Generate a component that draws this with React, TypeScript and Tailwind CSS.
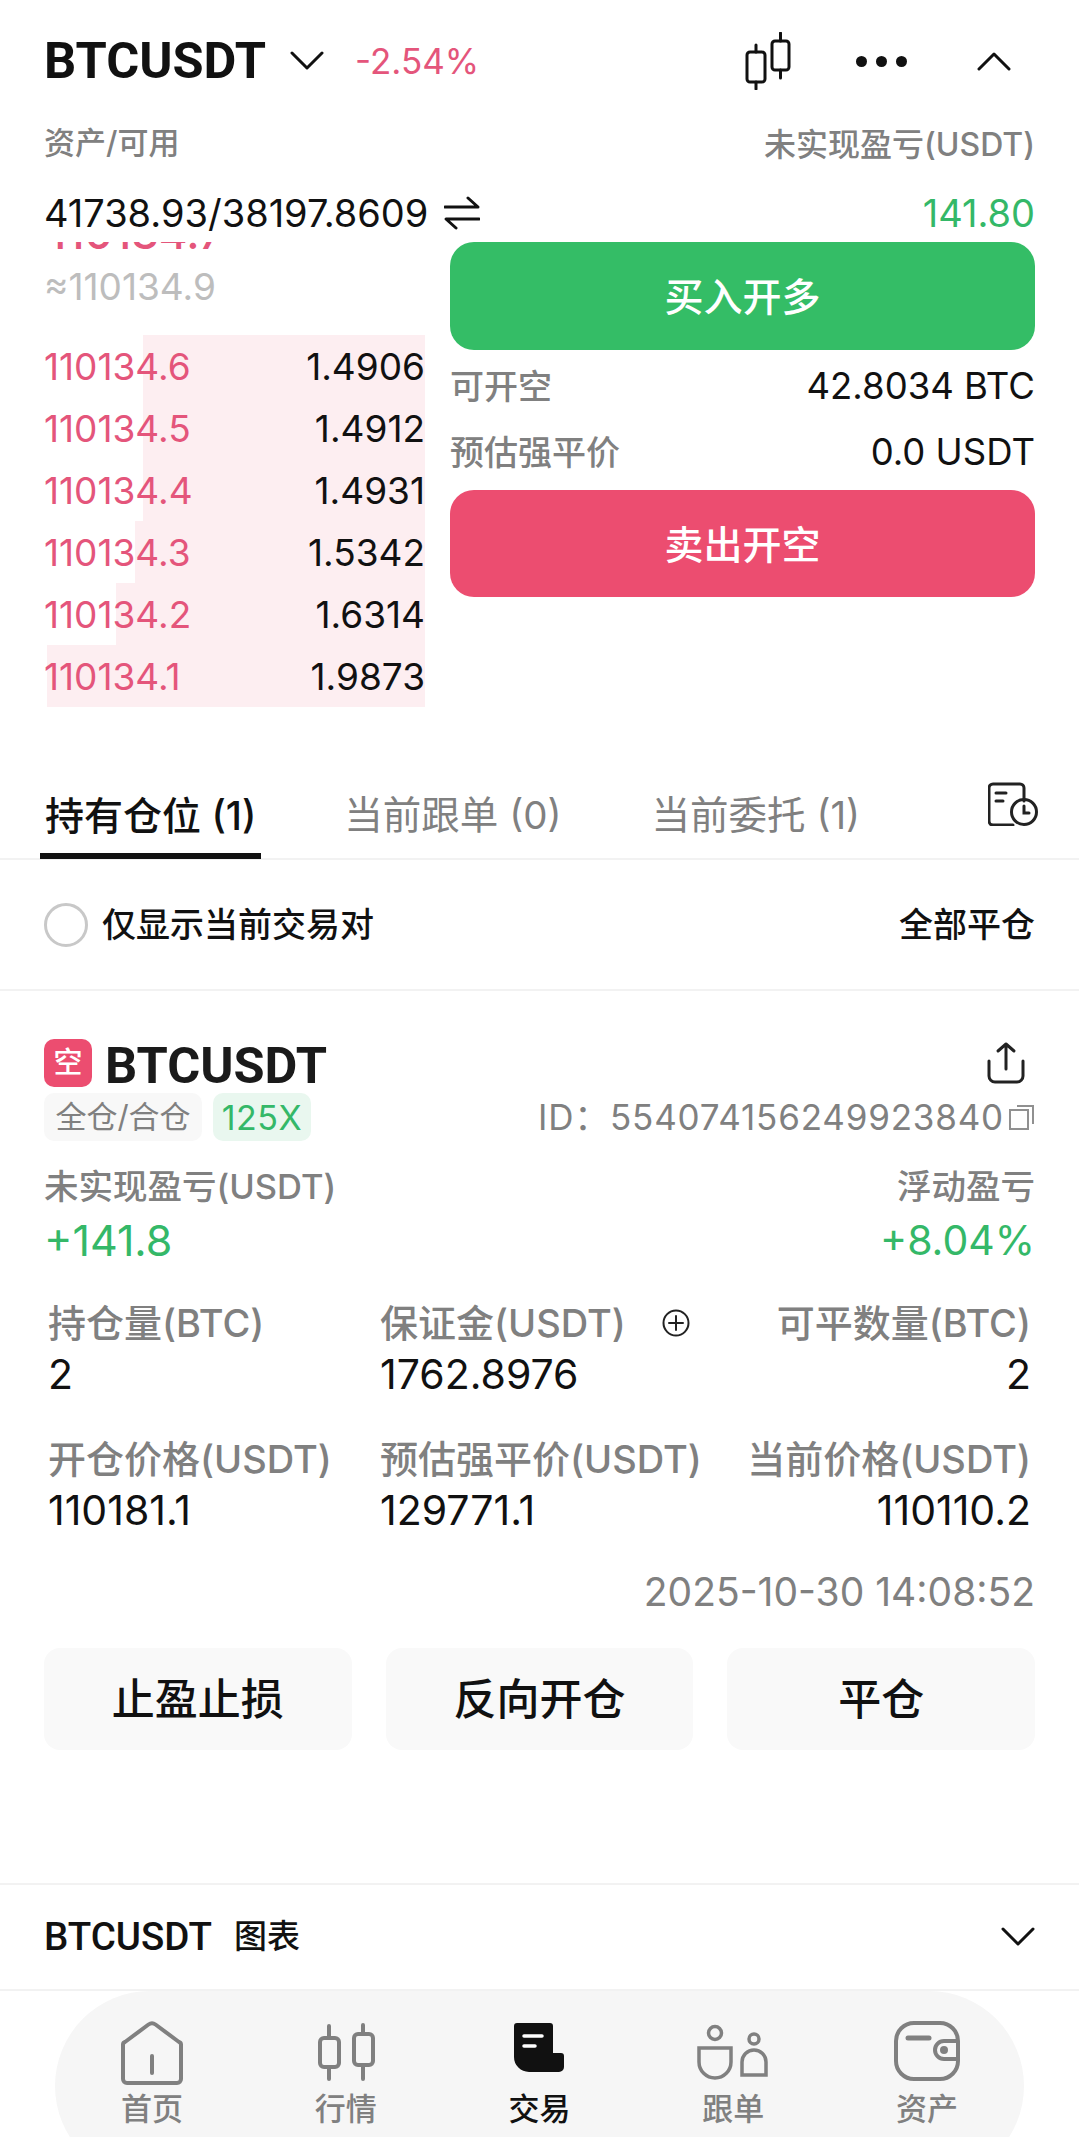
const depthRows = [
  { price: "110134.6", qty: "1.4906", bar: 282 },
  { price: "110134.5", qty: "1.4912", bar: 282 },
  { price: "110134.4", qty: "1.4931", bar: 282 },
  { price: "110134.3", qty: "1.5342", bar: 290 },
  { price: "110134.2", qty: "1.6314", bar: 309 },
  { price: "110134.1", qty: "1.9873", bar: 378 },
];

const gridRows = [
  [
    { label: "持仓量(BTC)", value: "2" },
    { label: "保证金(USDT)", value: "1762.8976", plus: true },
    { label: "可平数量(BTC)", value: "2" },
  ],
  [
    { label: "开仓价格(USDT)", value: "110181.1" },
    { label: "预估强平价(USDT)", value: "129771.1" },
    { label: "当前价格(USDT)", value: "110110.2" },
  ],
];

function Chevron({ up, className }: { up?: boolean; className: string }) {
  return (
    <svg viewBox="0 0 34 20" className={className} fill="none" stroke="#111" strokeWidth="3" strokeLinecap="round" strokeLinejoin="round">
      <path d={up ? "M2 18 17 3l15 15" : "M2 2l15 15L32 2"} />
    </svg>
  );
}

function CandleHeader() {
  return (
    <svg viewBox="0 0 46 58" className="w-[46px] h-[58px]" fill="none" stroke="#111" strokeWidth="3" strokeLinecap="round">
      <rect x="2" y="20" width="18" height="30" rx="3" />
      <path d="M11 13v7M11 50v7" />
      <rect x="27" y="9" width="17" height="29" rx="3" />
      <path d="M35.500 1v8M35.500 38v8" />
    </svg>
  );
}

function NavIcon({ name }: { name: string }) {
  if (name === "home") {
    return (
      <svg viewBox="0 0 62 64" className="w-[62px] h-[64px]" fill="none" stroke="#808080" strokeWidth="4" strokeLinejoin="round" strokeLinecap="round">
        <path d="M27.500 3.500a6 6 0 0 1 7 0L58 21a3 3 0 0 1 2 3v34a4 4 0 0 1-4 4H6a4 4 0 0 1-4-4V24a3 3 0 0 1 2-3Z" />
        <path d="M31 35v17" />
      </svg>
    );
  }
  if (name === "market") {
    return (
      <svg viewBox="0 0 58 64" className="w-[58px] h-[64px]" fill="none" stroke="#808080" strokeWidth="4" strokeLinecap="round">
        <rect x="3" y="17" width="19" height="29" rx="4" />
        <path d="M12 5v12M12 46v12" />
        <rect x="37" y="13" width="19" height="31" rx="4" />
        <path d="M46 4v9M46 44v14" />
      </svg>
    );
  }
  if (name === "trade") {
    return (
      <svg viewBox="0 0 50 64" className="w-[50px] h-[64px]">
        <path d="M3 2h33a3 3 0 0 1 3 3v27h8a3 3 0 0 1 3 3v11a5 5 0 0 1-5 5H15A15 15 0 0 1 0 36V5a3 3 0 0 1 3-3Z" fill="#111" />
        <path d="M10 15h18M10 25h11" stroke="#fff" strokeWidth="3.500" strokeLinecap="round" />
      </svg>
    );
  }
  if (name === "copy") {
    return (
      <svg viewBox="0 0 72 64" className="w-[72px] h-[64px]" fill="none" stroke="#808080" strokeWidth="3.500">
        <circle cx="18" cy="12" r="6.500" />
        <path d="M2 27h32v14a16 16 0 0 1-32 0Z" />
        <circle cx="57" cy="18" r="5" />
        <path d="M45 54V41a12 12 0 0 1 24 0v13Z" />
      </svg>
    );
  }
  return (
    <svg viewBox="0 0 66 64" className="w-[66px] h-[64px]" fill="none" stroke="#808080" strokeWidth="4" strokeLinecap="round">
      <rect x="2" y="2" width="62" height="56" rx="18" />
      <path d="M14 17h21" strokeWidth="5" />
      <path d="M63 20H50a9 9 0 0 0 0 18h13" />
      <circle cx="50" cy="29" r="4" fill="#808080" stroke="none" />
    </svg>
  );
}

const navItems = [
  { key: "home", label: "首页" },
  { key: "market", label: "行情" },
  { key: "trade", label: "交易", active: true },
  { key: "copy", label: "跟单" },
  { key: "wallet", label: "资产" },
];

export default function App() {
  return (
    <div className="relative h-[2137px] w-[1079px] overflow-hidden bg-white text-[#111] font-['Inter','Noto_Sans_CJK_SC',sans-serif]">
      {/* top bar */}
      <div className="flex h-[122px] items-center px-[44px]">
        <span className="font-['Roboto','Noto_Sans_CJK_SC',sans-serif] text-[50.500px] font-bold leading-none">BTCUSDT</span>
        <Chevron className="ml-[24px] h-[20px] w-[34px]" />
        <span className="ml-[31px] text-[35px] leading-none text-[#e4557b]">-2.54%</span>
        <div className="ml-auto flex items-center">
          <CandleHeader />
          <div className="ml-[65px] flex gap-[9px]">
            <span className="h-[11px] w-[11px] rounded-full bg-[#111]" />
            <span className="h-[11px] w-[11px] rounded-full bg-[#111]" />
            <span className="h-[11px] w-[11px] rounded-full bg-[#111]" />
          </div>
          <Chevron up className="ml-[70px] mr-[24px] h-[20px] w-[34px]" />
        </div>
      </div>

      {/* balance */}
      <div className="flex h-[48px] items-center justify-between px-[44px] text-[#808080]">
        <span className="-mt-[6px] text-[31px] font-medium">资产/可用</span>
        <span className="text-[32px] -mt-[2px] font-medium">未实现盈亏(USDT)</span>
      </div>
      <div className="mt-[18px] flex h-[50px] items-center justify-between px-[44px] text-[38px]">
        <div className="flex items-center gap-[16px]">
          <span>41738.93/38197.8609</span>
          <svg viewBox="0 0 36 34" className="h-[34px] w-[36px]" fill="none" stroke="#111" strokeWidth="3" strokeLinecap="round" strokeLinejoin="round">
            <path d="M1 11h33L24 2M35 23H2l10 9" />
          </svg>
        </div>
        <span className="text-[#34b868]">141.80</span>
      </div>

      {/* order book + actions */}
      <div className="mt-[4px] flex justify-between px-[44px]">
        <div className="w-[381px]">
          <div className="h-[9px] overflow-hidden">
            <div className="-mt-[32px] pl-[4px] text-[44px] font-medium leading-[46px] text-[#e4557b]">110134.7</div>
          </div>
          <div className="mt-[14px] text-[37px] leading-[44px] text-[#bdbdbd]">≈110134.9</div>
          <div className="mt-[26px]">
            {depthRows.map((row) => (
              <div key={row.price} className="relative flex h-[62px] items-center justify-between pt-[2px] text-[37px]">
                <div className="absolute inset-y-0 right-0 bg-[#fdeef1]" style={{ width: row.bar }} />
                <span className="relative text-[#e4557b]">{row.price}</span>
                <span className="relative">{row.qty}</span>
              </div>
            ))}
          </div>
        </div>
        <div className="w-[585px]">
          <div className="flex h-[108px] items-center justify-center rounded-[24px] bg-[#34bd66] pt-[3px] text-[39px] font-medium text-white">买入开多</div>
          <div className="mt-[8px] flex h-[56px] items-center justify-between text-[36.500px]">
            <span className="text-[34px] font-medium text-[#808080]">可开空</span>
            <span>42.8034 BTC</span>
          </div>
          <div className="mt-[10px] flex h-[56px] items-center justify-between text-[36.500px]">
            <span className="text-[34px] font-medium text-[#808080]">预估强平价</span>
            <span>0.0 USDT</span>
          </div>
          <div className="mt-[10px] flex h-[107px] items-center justify-center rounded-[24px] bg-[#ec4d70] pt-[4px] text-[39px] font-medium text-white">卖出开空</div>
        </div>
      </div>

      {/* tabs */}
      <div className="mt-[57px] flex h-[96px] items-end border-b-2 border-[#f2f2f2] pl-[40px] leading-none">
        <div className="flex items-center text-[38.500px]">
          <div className="-mb-[2px] border-b-[6px] border-[#111] px-[5px] pb-[18px] text-[39px] font-medium">持有仓位 (1)</div>
          <div className="ml-[83px] pb-[24px] text-[#808080]">当前跟单 (0)</div>
          <div className="ml-[90px] pb-[24px] text-[#808080]">当前委托 (1)</div>
        </div>
        <svg viewBox="0 0 50 44" className="mb-[32px] ml-auto mr-[41px] h-[44px] w-[50px]" fill="none" stroke="#222" strokeWidth="3" strokeLinecap="round">
          <path d="M36 19V6a4 4 0 0 0-4-4H5a4 4 0 0 0-4 4v33a4 4 0 0 0 4 4h20" />
          <path d="M8 11h10M8 19h7" />
          <circle cx="36" cy="30" r="12.500" />
          <path d="M36 24v7h5" />
        </svg>
      </div>

      {/* filter */}
      <div className="flex h-[131px] items-center border-b-2 border-[#f2f2f2] px-[44px] text-[34px] font-medium">
        <span className="h-[44px] w-[44px] rounded-full border-[3px] border-[#c8c8c8]" />
        <span className="ml-[14px]">仅显示当前交易对</span>
        <span className="ml-auto">全部平仓</span>
      </div>

      {/* position card */}
      <div className="px-[44px] pt-[47px]">
        <div className="flex h-[50px] items-center">
          <span className="flex h-[48px] w-[48px] items-center justify-center rounded-[10px] bg-[#ec4d70] text-[29px] font-medium text-white">空</span>
          <span className="ml-[13px] mt-[6px] font-['Roboto','Noto_Sans_CJK_SC',sans-serif] text-[50.500px] font-bold leading-none text-[#1a1a1a]">BTCUSDT</span>
          <svg viewBox="0 0 38 42" className="ml-auto mr-[10px] h-[42px] w-[38px]" fill="none" stroke="#222" strokeWidth="3" strokeLinecap="round" strokeLinejoin="round">
            <path d="M19 27V2M11 9l8-7 8 7" />
            <path d="M2 19v15a6 6 0 0 0 6 6h22a6 6 0 0 0 6-6V19" />
          </svg>
        </div>
        <div className="mt-[5px] flex h-[48px] items-center gap-[11px]">
          <span className="flex h-[48px] w-[158px] items-center justify-center rounded-[10px] bg-[#f8f8f8] text-[31px] text-[#808080]">全仓/合仓</span>
          <span className="flex h-[48px] w-[98px] items-center justify-center rounded-[10px] bg-[#e9f7ef] text-[34px] text-[#34b868] tracking-[0.5px]">125X</span>
          <span className="ml-auto flex items-center text-[35px] text-[#808080] tracking-[0.8px]">
            ID：554074156249923840
            <svg viewBox="0 0 26 26" className="ml-[5px] h-[26px] w-[26px]" fill="none" stroke="#909090" strokeWidth="2">
              <rect x="1" y="6" width="18" height="19" />
              <path d="M8 2h16v18" />
            </svg>
          </span>
        </div>
        <div className="mt-[24px] flex justify-between text-[34.500px] font-medium leading-[44px] text-[#808080]">
          <span>未实现盈亏(USDT)</span>
          <span>浮动盈亏</span>
        </div>
        <div className="mt-[6px] flex justify-between leading-[50px] text-[#34b868]">
          <span className="text-[43px]">+141.8</span>
          <span className="text-[41px]">+8.04%</span>
        </div>

        <div className="mt-[34px] pl-[4px] pr-[4px]">
          {gridRows.map((row, i) => (
            <div key={i} className={`grid grid-cols-[332px_1fr_auto] ${i > 0 ? "mt-[36px]" : ""}`}>
              {row.map((cell, j) => (
                <div key={cell.label} className={j === 2 ? "text-right" : ""}>
                  <div className="flex items-center text-[38px] font-medium leading-[48px] text-[#808080]">
                    <span className={j === 2 ? "ml-auto" : ""}>{cell.label}</span>
                    {cell.plus && (
                      <svg viewBox="0 0 28 28" className="ml-[36px] h-[28px] w-[28px]" fill="none" stroke="#222" strokeWidth="2" strokeLinecap="round">
                        <circle cx="14" cy="14" r="12.500" />
                        <path d="M14 7v14M7 14h14" />
                      </svg>
                    )}
                  </div>
                  <div className="mt-[2px] text-[41px] leading-[50px]">{cell.value}</div>
                </div>
              ))}
            </div>
          ))}
        </div>

        <div className="mt-[34px] text-right text-[39px] leading-[46px] text-[#808080]">2025-10-30 14:08:52</div>

        <div className="mt-[33px] grid grid-cols-3 gap-[34px]">
          {["止盈止损", "反向开仓", "平仓"].map((t) => (
            <div key={t} className="flex h-[102px] items-center justify-center rounded-[16px] bg-[#f9f9f9] text-[43px] font-medium">
              {t}
            </div>
          ))}
        </div>
      </div>

      {/* chart row */}
      <div className="mt-[133px] flex h-[108px] items-center border-y-2 border-[#f2f2f2] px-[44px] text-[33px] font-medium">
        <span className="font-['Roboto','Noto_Sans_CJK_SC',sans-serif] text-[38.500px]">BTCUSDT</span>
        <span className="ml-[22px]">图表</span>
        <Chevron className="ml-auto h-[20px] w-[34px]" />
      </div>

      {/* bottom nav */}
      <div className="mx-[55px] flex h-[190px] rounded-[95px] bg-[#f6f6f6] pt-[30px]">
        {navItems.map((item) => (
          <div key={item.key} className="flex w-[194px] flex-col items-center">
            <NavIcon name={item.key} />
            <span className={`mt-[5px] text-[31px] font-medium leading-[38px] ${item.active ? "text-[#111]" : "text-[#808080]"}`}>{item.label}</span>
          </div>
        ))}
      </div>
    </div>
  );
}
